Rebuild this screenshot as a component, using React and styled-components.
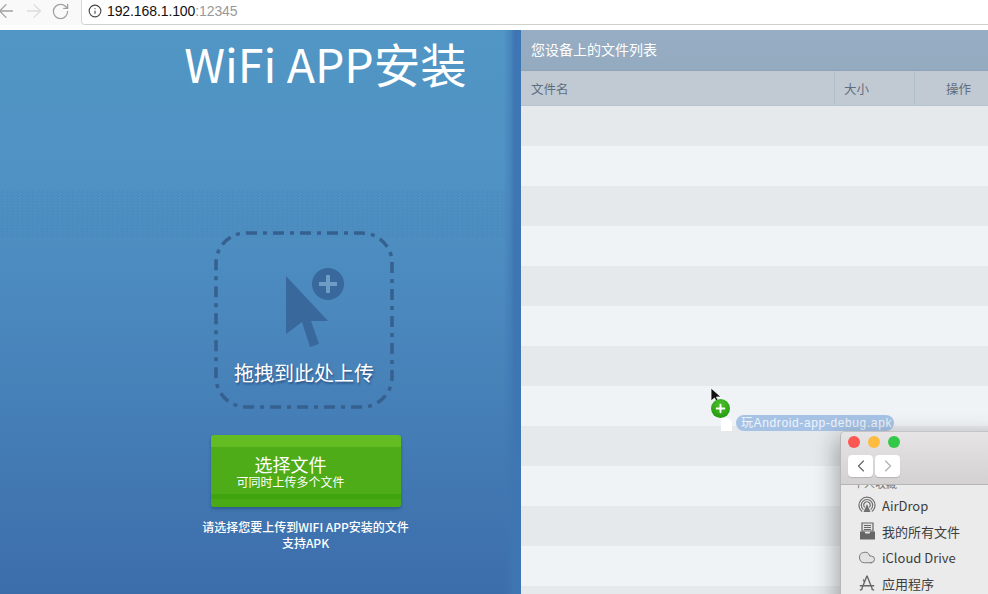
import React from 'react';
import styled, { createGlobalStyle } from 'styled-components';
import { ArrowLeft, ArrowRight, RotateCw, Info, ChevronLeft, ChevronRight, Cloud, Plus } from 'lucide-react';

const CJK = '"Noto Sans CJK SC", "Liberation Sans", sans-serif';

const GlobalStyle = createGlobalStyle`
    html, body {
        margin: 0;
        padding: 0;
        width: 988px;
        height: 594px;
        overflow: hidden;
        background: #fff;
    }
    * {
        box-sizing: border-box;
    }
`;

const Page = styled.div`
    position: relative;
    width: 988px;
    height: 594px;
    overflow: hidden;
    display: flex;
    flex-direction: column;
    font-family: ${CJK};
`;

const BrowserBar = styled.div`
    height: 30px;
    flex: none;
    background: #fff;
    padding-bottom: 5px;
    display: flex;
    align-items: stretch;
`;

const NavButtons = styled.div`
    width: 81px;
    flex: none;
    display: flex;
    align-items: center;
    background: #f9f9f9;
    padding: 0 0 3px 0;
    gap: 6px;
    color: #a0a0a0;

    svg:first-child {
        margin-left: -5px;
    }
`;

const AddressBox = styled.div`
    flex: 1;
    display: flex;
    align-items: center;
    background: #fff;
    border-left: 1px solid #d6d6d6;
    border-bottom: 1px solid #d0d0d0;
    border-bottom-left-radius: 4px;
    padding: 0 0 2px 6px;
    gap: 5px;
    color: #444;
`;

const Url = styled.span`
    font: 14px "Liberation Sans", sans-serif;
    color: #111;
    letter-spacing: -0.1px;
`;

const Port = styled.span`
    color: #999;
`;

const Main = styled.div`
    flex: 1;
    display: flex;
    min-height: 0;
`;

const UploadPanel = styled.section`
    position: relative;
    width: 521px;
    flex: none;
    display: flex;
    flex-direction: column;
    align-items: center;
    padding-left: 90px;
    color: #fff;
    background:
        linear-gradient(90deg, rgba(62, 118, 179, 0) 96.6%, rgba(62, 118, 179, 0.5) 98%, #3e76b3 98.7%),
        linear-gradient(180deg, #5196c5 0%, #4f91c3 30%, #4782b9 62%, #3c6dab 100%);

    &::before {
        content: '';
        position: absolute;
        left: 0;
        right: 14px;
        top: 160px;
        height: 48px;
        background: repeating-conic-gradient(rgba(58, 112, 170, 0.15) 0 25%, transparent 0 50%) 0 0 / 5px 3px;
    }
`;

const Title = styled.h1`
    position: relative;
    margin: 0 0 0 40px;
    font-size: 46.5px;
    line-height: 66px;
    font-weight: 400;
    white-space: nowrap;
`;

const DropZone = styled.div`
    position: relative;
    width: 180px;
    height: 178px;
    margin-top: 135px;
    margin-right: 3px;
    display: flex;
    flex-direction: column;
    align-items: center;
`;

const DashedOutline = styled.svg`
    position: absolute;
    inset: 0;
`;

const PointerIcon = styled.svg`
    margin-top: 35px;
    margin-left: 22px;
    display: block;
`;

const DropLabel = styled.div`
    margin-top: 9px;
    font-size: 20px;
    line-height: 28px;
    white-space: nowrap;
    text-shadow: 1px 2px 2px rgba(40, 75, 125, 0.8);
`;

const PickButton = styled.button`
    position: relative;
    width: 190px;
    height: 72px;
    margin-top: 26px;
    border: 0;
    border-radius: 3px;
    padding: 18px 30px 0 0;
    display: flex;
    flex-direction: column;
    align-items: center;
    color: #fff;
    font-family: ${CJK};
    background: linear-gradient(180deg, #63bc21 0, #63bc21 12px, #4dac18 12px, #4dac18 59px, #40a410 59px, #40a410 64px, #4aaa16 64px);
    box-shadow: 0 2px 3px rgba(30, 70, 110, 0.55);
`;

const PickTitle = styled.span`
    font-size: 18px;
    line-height: 22px;
`;

const PickHint = styled.span`
    font-size: 12px;
    line-height: 14px;
`;

const Caption = styled.p`
    margin: 12px 0 0;
    font-size: 12px;
    line-height: 16px;
    font-weight: 500;
    text-align: center;
    white-space: nowrap;
`;

const FilePanel = styled.section`
    flex: 1;
    display: flex;
    flex-direction: column;
    min-width: 0;
`;

const PanelTitle = styled.div`
    height: 41px;
    flex: none;
    padding: 0 0 2px 10px;
    display: flex;
    align-items: center;
    background: linear-gradient(180deg, #97adc4 0, #94aabf 100%);
    border-bottom: 1px solid #8da4bb;
    color: #fff;
    font-size: 14px;
`;

const HeadRow = styled.div`
    height: 35px;
    flex: none;
    display: grid;
    grid-template-columns: 314px 80px 1fr;
    background: #c1cad2;
    border-bottom: 1px solid #b7c3cd;
    color: #5d6e80;
    font-size: 12.5px;
`;

const HeadCell = styled.div`
    display: flex;
    align-items: center;
    padding: 0 ${(p) => (p.$right ? '17px' : '9px')} 0 ${(p) => (p.$first ? '10px' : '9px')};
    justify-content: ${(p) => (p.$right ? 'flex-end' : 'flex-start')};
    border-right: ${(p) => (p.$right ? '0' : '1px solid #b2c0cc')};
`;

const FileRow = styled.div`
    height: 40px;
    flex: none;
    background: ${(p) => (p.$odd ? '#eff3f6' : '#e5e9ec')};
`;

const DragGhost = styled.div`
    position: absolute;
    left: 710px;
    top: 387px;
    width: 190px;
    height: 46px;
`;

const GhostCursor = styled.svg`
    position: absolute;
    left: 0;
    top: 0;
`;

const GhostBadge = styled.div`
    position: absolute;
    left: 1px;
    top: 12px;
    width: 19px;
    height: 19px;
    border-radius: 50%;
    background: radial-gradient(circle at 50% 30%, #4cc02c, #1c9208);
    color: #fff;
    display: flex;
    align-items: center;
    justify-content: center;
`;

const GhostFile = styled.div`
    position: absolute;
    left: 11px;
    top: 31px;
    width: 11px;
    height: 13px;
    background: #fff;
    clip-path: polygon(0 0, 68% 0, 100% 26%, 100% 100%, 0 100%);
`;

const GhostLabel = styled.div`
    position: absolute;
    left: 26px;
    top: 28px;
    height: 16px;
    width: 158px;
    padding-left: 5px;
    border-radius: 8px;
    background: #a6c3e6;
    color: #eef4fb;
    font: 12px/16px "Liberation Sans", ${CJK};
    letter-spacing: 0.62px;
    white-space: nowrap;
`;

const FinderWindow = styled.div`
    position: absolute;
    left: 840px;
    top: 431px;
    width: 170px;
    height: 180px;
    border-top-left-radius: 5px;
    background: #ebebeb;
    border-left: 1px solid #b8b8b8;
    border-top: 1px solid #c4c4c4;
    box-shadow: -4px 6px 22px rgba(0, 0, 0, 0.3);
`;

const FinderTop = styled.div`
    height: 53px;
    padding: 4px 0 0 7px;
    background: linear-gradient(180deg, #e6e4e4, #d3d1d1);
    border-bottom: 1px solid #b6b6b6;
    border-top-left-radius: 5px;
`;

const Lights = styled.div`
    display: flex;
    gap: 8px;
    height: 12px;
`;

const Light = styled.span`
    width: 12px;
    height: 12px;
    border-radius: 50%;
    background: ${(p) => p.$color};
`;

const FinderNav = styled.div`
    display: flex;
    gap: 2px;
    margin-top: 7px;
`;

const FinderNavButton = styled.div`
    width: 25px;
    height: 22px;
    background: #fff;
    border-radius: 4px;
    box-shadow: 0 1px 1px rgba(0, 0, 0, 0.15);
    display: flex;
    align-items: center;
    justify-content: center;
    color: ${(p) => (p.$off ? '#b0b0b0' : '#666')};
`;

const Sidebar = styled.div`
    padding: 7px 0 0 17px;
    position: relative;
`;

const SideItem = styled.div`
    height: 26px;
    display: flex;
    align-items: center;
    gap: 6px;
    font: 13px ${CJK};
    color: #3d3d3d;
    white-space: nowrap;
`;

const SideIcon = styled.span`
    width: 18px;
    height: 18px;
    flex: none;
    display: flex;
    align-items: center;
    justify-content: center;
    color: #6f6f6f;
`;

/* only the bottom of this heading shows below the toolbar */
const SideHeading = styled.div`
    position: absolute;
    left: 12px;
    top: 0;
    height: 4px;
    display: flex;
    align-items: flex-end;
    overflow: hidden;
    font-size: 11px;
    line-height: 12px;
    color: #777;
`;

const AirDropIcon = () => (
    <svg width="18" height="18" viewBox="0 0 18 18" fill="none" stroke="#707070" strokeWidth="1.2">
        <path d="M4.2 15.6a8 8 0 1 1 9.6 0" />
        <path d="M5.4 13.6a5.7 5.7 0 1 1 7.2 0" />
        <path d="M6.7 11.4a3.3 3.3 0 1 1 4.6 0" />
        <path d="M9 8l3.5 8h-7z" fill="#707070" stroke="none" />
    </svg>
);

const TrayIcon = () => (
    <svg width="17" height="18" viewBox="0 0 17 18">
        <path d="M3 1h11v8H3z" fill="#e4e4e4" stroke="#666" strokeWidth="1.2" />
        <path d="M5 3.5h7M5 5.5h7M5 7.5h7" stroke="#666" strokeWidth="1" />
        <path d="M1 9.5h4.5l1 2h4l1-2H16v8H1z" fill="#666" />
    </svg>
);

const AppsIcon = () => (
    <svg width="20" height="18" viewBox="0 0 20 18" fill="none" stroke="#666" strokeWidth="1.5">
        <path d="M10 1 4 16M10 1l6 15M2 12h16M7 8 6 5M5 16l-3 1M15 16l3 1" />
    </svg>
);

const rows = Array.from({ length: 13 }, (_, i) => i);

const App = () => {
    return (
        <Page>
            <GlobalStyle />
            <BrowserBar>
                <NavButtons>
                    <ArrowLeft size={22} strokeWidth={1.4} />
                    <ArrowRight size={22} strokeWidth={1.4} color="#dcdcdc" />
                    <RotateCw size={19} strokeWidth={1.6} />
                </NavButtons>
                <AddressBox>
                    <Info size={14} strokeWidth={1.9} />
                    <Url>192.168.1.100<Port>:12345</Port></Url>
                </AddressBox>
            </BrowserBar>
            <Main>
                <UploadPanel>
                    <Title>WiFi APP安装</Title>
                    <DropZone>
                        <DashedOutline width="180" height="178" viewBox="0 0 180 178" fill="none">
                            <rect x="2" y="2" width="176" height="174" rx="30" stroke="#35608f" strokeWidth="3.5" strokeDasharray="11 6 4 6" />
                        </DashedOutline>
                        <PointerIcon width="62" height="84" viewBox="0 0 62 84">
                            <path d="M2 10v58l16-12 8 25 9-3-8-23h17z" fill="#39689c" />
                            <circle cx="44" cy="18" r="16" fill="#39689c" />
                            <path d="M44 9v18M35 18h18" stroke="#6f9cc6" strokeWidth="4" />
                        </PointerIcon>
                        <DropLabel>拖拽到此处上传</DropLabel>
                    </DropZone>
                    <PickButton>
                        <PickTitle>选择文件</PickTitle>
                        <PickHint>可同时上传多个文件</PickHint>
                    </PickButton>
                    <Caption>
                        请选择您要上传到WIFI APP安装的文件
                        <br />
                        支持APK
                    </Caption>
                </UploadPanel>
                <FilePanel>
                    <PanelTitle>您设备上的文件列表</PanelTitle>
                    <HeadRow>
                        <HeadCell $first>文件名</HeadCell>
                        <HeadCell>大小</HeadCell>
                        <HeadCell $right>操作</HeadCell>
                    </HeadRow>
                    {rows.map((i) => (
                        <FileRow key={i} $odd={i % 2 === 1} />
                    ))}
                </FilePanel>
            </Main>
            <DragGhost>
                <GhostCursor width="14" height="18" viewBox="0 0 14 18">
                    <path d="M1 1v13l3.5-3 2.5 5 2-1-2.5-5H11z" fill="#111" stroke="#fff" strokeWidth="0.8" />
                </GhostCursor>
                <GhostBadge>
                    <Plus size={13} strokeWidth={3.5} />
                </GhostBadge>
                <GhostFile />
                <GhostLabel>玩Android-app-debug.apk</GhostLabel>
            </DragGhost>
            <FinderWindow>
                <FinderTop>
                    <Lights>
                        <Light $color="#fc5753" />
                        <Light $color="#fdbc40" />
                        <Light $color="#34c84a" />
                    </Lights>
                    <FinderNav>
                        <FinderNavButton>
                            <ChevronLeft size={20} strokeWidth={1.4} />
                        </FinderNavButton>
                        <FinderNavButton $off>
                            <ChevronRight size={20} strokeWidth={1.4} />
                        </FinderNavButton>
                    </FinderNav>
                </FinderTop>
                <Sidebar>
                    <SideHeading><span>个人收藏</span></SideHeading>
                    <SideItem><SideIcon><AirDropIcon /></SideIcon>AirDrop</SideItem>
                    <SideItem><SideIcon><TrayIcon /></SideIcon>我的所有文件</SideItem>
                    <SideItem><SideIcon><Cloud size={19} strokeWidth={1.2} fill="#e2e2e2" /></SideIcon>iCloud Drive</SideItem>
                    <SideItem><SideIcon><AppsIcon /></SideIcon>应用程序</SideItem>
                </Sidebar>
            </FinderWindow>
        </Page>
    );
};

export default App;
